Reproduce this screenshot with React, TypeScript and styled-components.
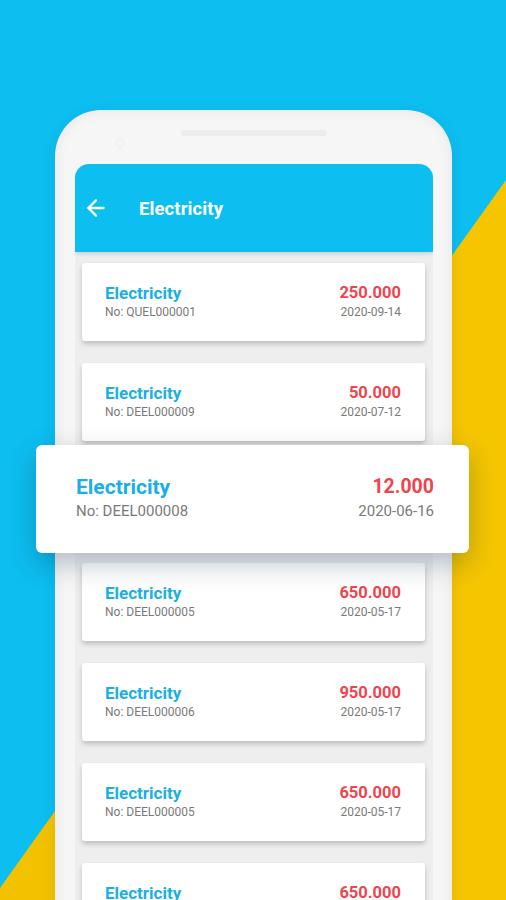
import React from "react";
import styled, { createGlobalStyle } from "styled-components";
import { ArrowLeft } from "lucide-react";

const Global = createGlobalStyle`
  html, body { margin: 0; padding: 0; }
  body { font-family: Roboto, "Liberation Sans", Arial, sans-serif; overflow: hidden; }
`;

const Stage = styled.div`
  position: relative;
  width: 506px;
  height: 900px;
  overflow: hidden;
  background: #0dbef0;
  &::before {
    content: "";
    position: absolute;
    inset: 0;
    background: linear-gradient(90deg, #f2c200, #f5c600);
    clip-path: polygon(506px 180px, 506px 900px, 0 900px, 0 888px);
  }
`;

const Phone = styled.div`
  position: relative;
  margin: 110px 0 0 55px;
  width: 397px;
  height: 820px;
  box-sizing: border-box;
  padding: 0 19px 0 20px;
  border-radius: 46px 46px 0 0;
  background: #f6f6f6;
  box-shadow: inset 0 0 14px rgba(0, 0, 0, 0.07), 0 4px 16px rgba(0, 0, 0, 0.08);
`;

const Bezel = styled.div`
  position: relative;
  height: 54px;
  display: flex;
  justify-content: center;
`;

const Speaker = styled.div`
  margin-top: 20px;
  width: 146px;
  height: 6px;
  border-radius: 3px;
  background: #ececec;
`;

const Camera = styled.div`
  position: absolute;
  left: 40px;
  top: 28px;
  width: 8px;
  height: 8px;
  border-radius: 50%;
  border: 1px solid #efefef;
`;

const Screen = styled.div`
  background: #eeeeee;
  border-radius: 14px 14px 0 0;
  overflow: hidden;
  height: 760px;
`;

const Header = styled.div`
  height: 88px;
  background: #0dbef0;
  display: flex;
  align-items: center;
  padding-left: 8px;
  color: #fff;
  box-shadow: 0 2px 4px rgba(0, 0, 0, 0.12);
  position: relative;
`;

const Title = styled.div`
  margin-left: 30px;
  margin-top: 1px;
  font-size: 18.5px;
  font-weight: 700;
  letter-spacing: 0.1px;
`;

const List = styled.div`
  display: flex;
  flex-direction: column;
  gap: 22px;
  padding: 11px 8px 0 7px;
`;

const Card = styled.div<{ $big?: boolean }>`
  display: flex;
  justify-content: space-between;
  align-items: center;
  background: #fff;
  border-radius: ${(p) => (p.$big ? "6px" : "3px")};
  height: ${(p) => (p.$big ? "108px" : "78px")};
  padding: ${(p) => (p.$big ? "0 35px 0 40px" : "0 24px 0 23px")};
  box-sizing: border-box;
  flex-shrink: 0;
  box-shadow: ${(p) =>
    p.$big
      ? "0 10px 28px rgba(0, 40, 70, 0.28)"
      : "0 3px 5px rgba(0, 0, 0, 0.2)"};
`;

const Popup = styled(Card)`
  position: absolute;
  left: 36px;
  top: 445px;
  width: 433px;
`;

const Col = styled.div<{ $right?: boolean }>`
  display: flex;
  flex-direction: column;
  align-items: ${(p) => (p.$right ? "flex-end" : "flex-start")};
  margin-top: ${(p) => "-2px"};
`;

const Name = styled.div<{ $big?: boolean }>`
  color: #1aafe6;
  font-weight: 700;
  font-size: ${(p) => (p.$big ? "21px" : "17px")};
  line-height: ${(p) => (p.$big ? "24px" : "20px")};
`;

const Amount = styled.div<{ $big?: boolean }>`
  color: #f0444d;
  font-weight: 700;
  font-size: ${(p) => (p.$big ? "19.5px" : "16.5px")};
  line-height: ${(p) => (p.$big ? "24px" : "20px")};
`;

const Sub = styled.div<{ $big?: boolean }>`
  color: #7a7a7a;
  font-size: ${(p) => (p.$big ? "15px" : "12px")};
  line-height: ${(p) => (p.$big ? "20px" : "16px")};
  margin-top: ${(p) => (p.$big ? "2px" : "1px")};
`;

type Bill = { no: string; amount: string; date: string };

const bills: Bill[] = [
  { no: "QUEL000001", amount: "250.000", date: "2020-09-14" },
  { no: "DEEL000009", amount: "50.000", date: "2020-07-12" },
  { no: "DEEL000008", amount: "12.000", date: "2020-06-16" },
  { no: "DEEL000005", amount: "650.000", date: "2020-05-17" },
  { no: "DEEL000006", amount: "950.000", date: "2020-05-17" },
  { no: "DEEL000005", amount: "650.000", date: "2020-05-17" },
  { no: "DEEL000005", amount: "650.000", date: "2020-05-17" },
];

function BillCard({ bill, big }: { bill: Bill; big?: boolean }) {
  return (
    <>
      <Col>
        <Name $big={big}>Electricity</Name>
        <Sub $big={big}>No: {bill.no}</Sub>
      </Col>
      <Col $right>
        <Amount $big={big}>{bill.amount}</Amount>
        <Sub $big={big}>{bill.date}</Sub>
      </Col>
    </>
  );
}

export default function App() {
  return (
    <Stage>
      <Global />
      <Phone>
        <Bezel>
          <Camera />
          <Speaker />
        </Bezel>
        <Screen>
          <Header>
            <ArrowLeft size={26} strokeWidth={2.1} color="#fff" />
            <Title>Electricity</Title>
          </Header>
          <List>
            {bills.map((b, i) => (
              <Card key={i}>
                <BillCard bill={b} />
              </Card>
            ))}
          </List>
        </Screen>
      </Phone>
      <Popup $big>
        <BillCard bill={bills[2]} big />
      </Popup>
    </Stage>
  );
}
